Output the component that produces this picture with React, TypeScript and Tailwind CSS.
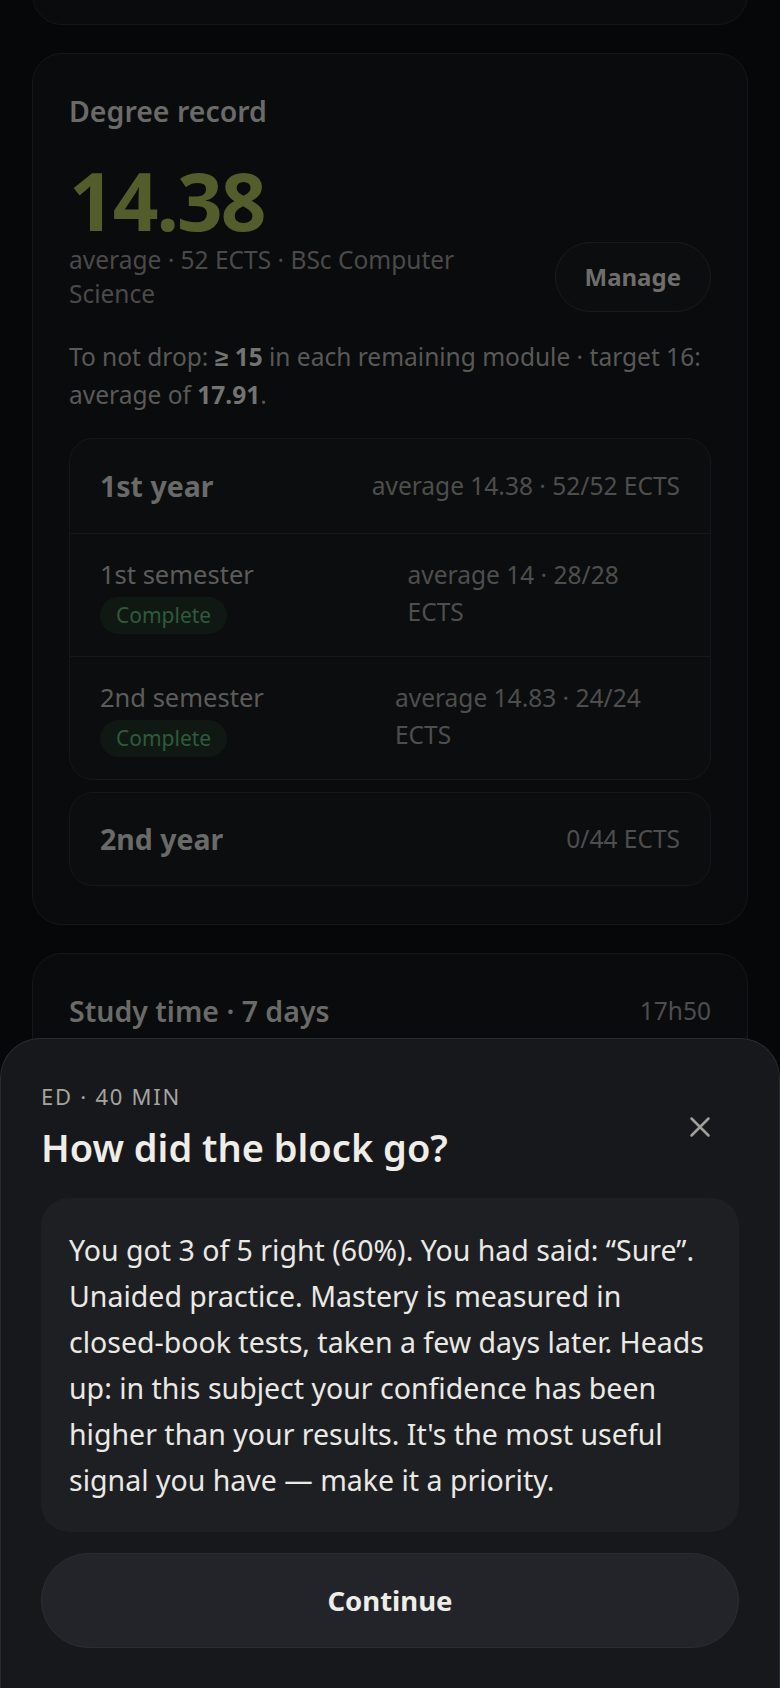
import { X } from "lucide-react";

// Grade record screen with the end-of-block feedback sheet open on top of it.
// The page behind the sheet is drawn already dimmed (no separate scrim layer).

type Semester = { name: string; stats: string };

const semesters: Semester[] = [
  { name: "1st semester", stats: "average 14 · 28/28 ECTS" },
  { name: "2nd semester", stats: "average 14.83 · 24/24 ECTS" },
];

function SemesterRow({ s }: { s: Semester }) {
  return (
    <div className="flex justify-between border-t border-[#16171a] px-[30px] pt-[22px] pb-[22px]">
      <div className="flex flex-wrap items-center gap-x-7 gap-y-[5px]">
        <span className="text-[25.5px] leading-[36px] text-[#5c5c5a]">{s.name}</span>
        <span className="rounded-full bg-[#101813] px-4 text-[21px] leading-[37px] text-[#2f5a3b]">Complete</span>
      </div>
      <div className="text-[24.5px] leading-[37px] text-[#4e4e4d]">{s.stats}</div>
    </div>
  );
}

function DegreeCard() {
  return (
    <section className="rounded-[30px] border border-[#16171a] bg-[#0a0b0d] px-9 pt-9 pb-[38px]">
      <h2 className="text-[28.5px] leading-[42px] font-semibold text-[#6a6a68]">Degree record</h2>
      <div className="mt-7 text-[80px] leading-none font-bold tracking-tight text-[#535d2b]">14.38</div>
      <div className="mt-[2px] flex items-center gap-8">
        <p className="min-w-0 flex-1 text-[24.5px] leading-[34px] text-[#4a4a49]">
          average · 52 ECTS · BSc Computer Science
        </p>
        <button className="h-[70px] shrink-0 rounded-full border border-[#1a1b1e] bg-[#0c0d0f] px-[29px] text-[24px] font-bold text-[#6e6e6c]">
          Manage
        </button>
      </div>
      <p className="mt-[26px] text-[24.5px] leading-[38px] text-[#595957]">
        To not drop: <b className="font-bold text-[#737371]">≥ 15</b> in each remaining module · target 16: average
        of <b className="font-bold text-[#737371]">17.91</b>.
      </p>

      <div className="mt-6 overflow-hidden rounded-[24px] border border-[#16171a] bg-[#0c0d0f]">
        <div className="flex items-center justify-between px-[30px] py-[26px]">
          <span className="text-[28.5px] leading-[42px] font-bold text-[#6a6a68]">1st year</span>
          <span className="text-[24.5px] text-[#4e4e4d]">average 14.38 · 52/52 ECTS</span>
        </div>
        {semesters.map((s) => (
          <SemesterRow key={s.name} s={s} />
        ))}
      </div>

      <div className="mt-[12px] flex items-center justify-between rounded-[24px] border border-[#16171a] bg-[#0c0d0f] px-[30px] py-[25px]">
        <span className="text-[28.5px] leading-[42px] font-bold text-[#6a6a68]">2nd year</span>
        <span className="text-[24.5px] text-[#4e4e4d]">0/44 ECTS</span>
      </div>
    </section>
  );
}

function StudyCard() {
  return (
    <section className="h-[420px] rounded-[30px] border border-[#16171a] bg-[#0a0b0d] p-9">
      <div className="flex items-center justify-between">
        <h2 className="text-[28.5px] leading-[42px] font-semibold text-[#6a6a68]">Study time · 7 days</h2>
        <span className="text-[24.5px] text-[#4e4e4d]">17h50</span>
      </div>
    </section>
  );
}

function FeedbackSheet() {
  return (
    <div className="absolute inset-x-0 bottom-0 rounded-t-[40px] border border-b-0 border-[#2a2b30] bg-[#17181b] px-10 pt-[43px] pb-10">
      <div className="flex items-center justify-between">
        <div>
          <div className="text-[22px] leading-[28px] tracking-[0.08em] text-[#a6a49e]">ED · 40 MIN</div>
          <h1 className="mt-[13px] text-[38px] leading-[49px] font-semibold text-[#eeede8]">How did the block go?</h1>
        </div>
        <button className="mr-[14px] flex h-[50px] w-[50px] items-center justify-center text-[#a19f99]">
          <X size={34} strokeWidth={1.8} />
        </button>
      </div>
      <div className="mt-[26px] rounded-[28px] bg-[#1e1f23] px-7 py-[29px] text-[28.5px] leading-[46px] text-[#eae9e4]">
        You got 3 of 5 right (60%). You had said: “Sure”. Unaided practice. Mastery is measured in closed-book tests,
        taken a few days later. Heads up: in this subject your confidence has been higher than your results. It's the
        most useful signal you have — make it a priority.
      </div>
      <button className="mt-[21px] h-[95px] w-full rounded-full border border-[#2b2d32] bg-[#222429] text-[27.5px] font-bold text-[#eeede8]">
        Continue
      </button>
    </div>
  );
}

export default function App() {
  return (
    <div className="relative h-[1688px] overflow-hidden bg-[#060708] font-['Noto_Sans',sans-serif]">
      <div className="flex flex-col gap-7 px-8">
        {/* bottom of the card above, scrolled mostly out of view */}
        <div className="-mt-[56px] h-[81px] shrink-0 rounded-[30px] border border-[#151619] bg-[#0a0b0d]" />
        <DegreeCard />
        <StudyCard />
      </div>
      <FeedbackSheet />
    </div>
  );
}
